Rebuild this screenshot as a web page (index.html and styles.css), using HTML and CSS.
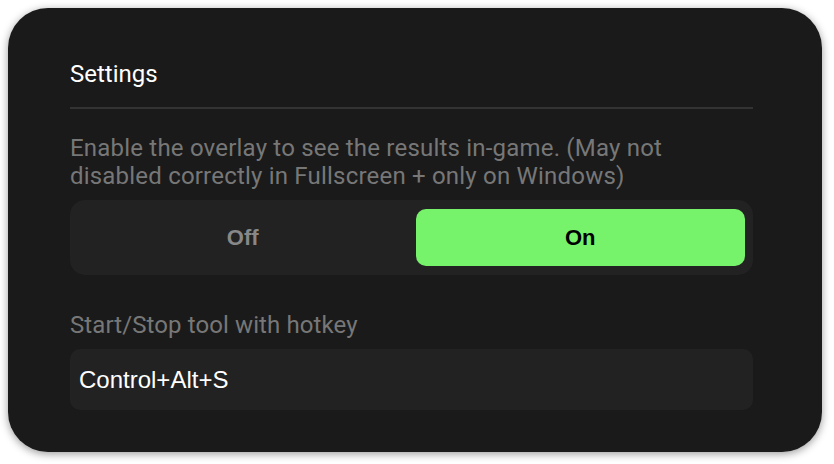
FILE: index.html
```html
<!DOCTYPE html>
<html>
<head>
<meta charset="utf-8">
<link rel="stylesheet" href="styles.css">
</head>
<body>
<div class="card">
  <div class="title">Settings</div>
  <div class="divider"></div>
  <p class="desc">Enable the overlay to see the results in-game. (May not disabled correctly in Fullscreen + only on Windows)</p>
  <div class="toggle">
    <button class="opt">Off</button>
    <button class="opt active">On</button>
  </div>
  <p class="label">Start/Stop tool with hotkey</p>
  <div class="hotkey">Control+Alt+S</div>
</div>
</body>
</html>
```
FILE: styles.css
```css
html, body {
  margin: 0;
  padding: 0;
  background: #ffffff;
}
body {
  padding: 8px;
  width: 834px;
  height: 464px;
  box-sizing: border-box;
}
.card {
  width: 814px;
  height: 444px;
  box-sizing: border-box;
  background: #1a1a1a;
  border-radius: 40px;
  box-shadow: 0 2px 8px rgba(0, 0, 0, 0.4);
  padding: 51px 69px 0 62px;
  display: flex;
  flex-direction: column;
  font-family: Roboto, "Liberation Sans", sans-serif;
}
.title {
  color: #ffffff;
  font-size: 24px;
  line-height: 30px;
  padding-bottom: 18px;
}
.divider {
  height: 2px;
  background: #333333;
}
.desc {
  margin: 25px 0 10px;
  color: #777777;
  font-size: 24px;
  line-height: 28px;
  letter-spacing: 0.2px;
}
.toggle {
  height: 75px;
  box-sizing: border-box;
  background: #222222;
  border-radius: 15px;
  padding: 9px 8px;
  display: flex;
  gap: 8px;
}
.opt {
  flex: 1;
  border: none;
  background: transparent;
  border-radius: 10px;
  font-family: "Liberation Sans", Arial, sans-serif;
  font-weight: bold;
  font-size: 22px;
  color: #888888;
  padding: 0;
}
.opt.active {
  background: #77f26b;
  color: #000000;
}
.label {
  margin: 36px 0 10px;
  color: #777777;
  font-size: 24px;
  line-height: 28px;
  letter-spacing: 0.1px;
}
.hotkey {
  height: 61px;
  box-sizing: border-box;
  background: #222222;
  border-radius: 10px;
  padding-left: 9px;
  display: flex;
  align-items: center;
  color: #ffffff;
  font-family: "Liberation Sans", Arial, sans-serif;
  font-size: 24px;
}
```
